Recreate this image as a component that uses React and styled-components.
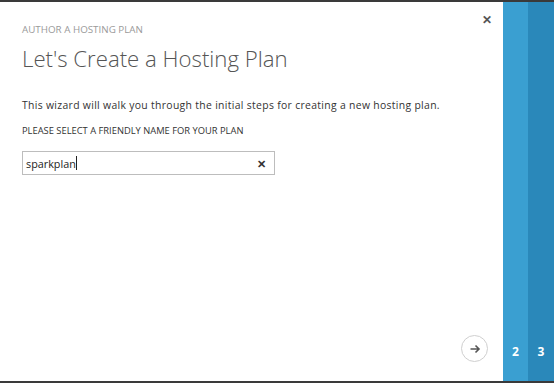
import React from "react";
import styled, { createGlobalStyle } from "styled-components";

const Global = createGlobalStyle`
  html, body { margin: 0; padding: 0; background: #fff; }
  body { font-family: "Open Sans", "Noto Sans", sans-serif; }
`;

const Frame = styled.div`
  width: 554px;
  height: 383px;
  box-sizing: border-box;
  border-top: 2px solid #3a3a3a;
  border-bottom: 2px solid #3a3a3a;
  display: flex;
  overflow: hidden;
`;

const Main = styled.div`
  position: relative;
  flex: 1;
  padding: 22px 22px 0 22px;
  display: flex;
  flex-direction: column;
`;

const Eyebrow = styled.div`
  font-size: 9.8px;
  color: #9a9a9a;
  line-height: 12px;
`;

const Title = styled.h1`
  margin: 8px 0 0 0;
  font-size: 22.2px;
  font-weight: 300;
  color: #555;
  line-height: 30px;
`;

const Desc = styled.p`
  margin: 25px 0 0 0;
  font-size: 10.4px;
  letter-spacing: 0.32px;
  color: #333;
  line-height: 13px;
`;

const Label = styled.div`
  margin-top: 12px;
  font-size: 9.35px;
  color: #333;
  line-height: 13px;
`;

const InputBox = styled.div`
  margin-top: 14px;
  width: 253px;
  height: 24px;
  box-sizing: border-box;
  border: 1px solid #bdbdbd;
  display: flex;
  align-items: center;
  padding: 0 8px 0 3px;
  font-size: 10.8px;
  color: #222;
`;

const Value = styled.span`
  flex: 1;
  display: flex;
  align-items: center;
`;

const Caret = styled.span`
  display: inline-block;
  width: 1px;
  height: 14px;
  background: #222;
`;

const Clear = styled.span`
  font-size: 11px;
  font-weight: 700;
  color: #333;
`;

const Close = styled.div`
  position: absolute;
  top: 9px;
  right: 11px;
  font-size: 12px;
  font-weight: 700;
  color: #555;
`;

const NextButton = styled.div`
  position: absolute;
  right: 15px;
  bottom: 19px;
  width: 25px;
  height: 25px;
  border-radius: 50%;
  border: 1.5px solid #cfcfcf;
  display: flex;
  align-items: center;
  justify-content: center;
`;

const Step = styled.div`
  width: ${(p) => p.$w}px;
  background: ${(p) => p.$bg};
  display: flex;
  align-items: flex-end;
  justify-content: center;
  padding-bottom: 21px;
  box-sizing: border-box;
  color: #fff;
  font-weight: 700;
  font-size: 12px;
  font-family: "Open Sans", "Noto Sans", sans-serif;
`;

export default function App() {
  return (
    <>
      <Global />
      <Frame>
        <Main>
          <Eyebrow>AUTHOR A HOSTING PLAN</Eyebrow>
          <Title>Let's Create a Hosting Plan</Title>
          <Desc>This wizard will walk you through the initial steps for creating a new hosting plan.</Desc>
          <Label>PLEASE SELECT A FRIENDLY NAME FOR YOUR PLAN</Label>
          <InputBox>
            <Value>sparkplan<Caret /></Value>
            <Clear>✕</Clear>
          </InputBox>
          <Close>✕</Close>
          <NextButton>
            <svg width="12" height="12" viewBox="0 0 12 12">
              <path d="M1.5 6H10M6.5 2.5L10 6L6.5 9.5" fill="none" stroke="#555" strokeWidth="1.6" />
            </svg>
          </NextButton>
        </Main>
        <Step $w={25} $bg="#3a9fd1">2</Step>
        <Step $w={26} $bg="#2a88ba">3</Step>
      </Frame>
    </>
  );
}
